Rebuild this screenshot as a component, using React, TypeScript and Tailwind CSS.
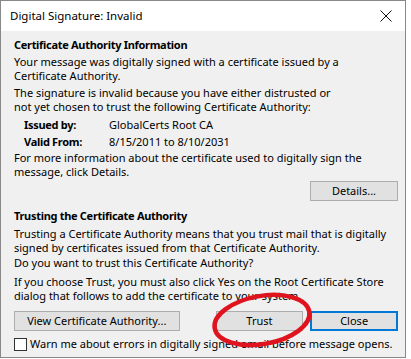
import React from 'react';

const font = { fontFamily: '"Noto Sans", "Open Sans", Arial, sans-serif' };

export default function App() {
  return (
    <div className="w-[411px] h-[359px] bg-white" style={font}>
      <div className="relative w-[406px] h-[358px] border border-[#888888] bg-[#f0f0f0] flex flex-col text-[11px] leading-[14px] text-black whitespace-nowrap">
        <div className="h-[30px] bg-white flex items-center justify-between pl-[9px] pr-[10px]">
          <span className="text-[11.5px]">Digital Signature: Invalid</span>
          <svg width="12" height="12" viewBox="0 0 12 12" className="mr-[3px]">
            <path d="M0.5 0.5L11.5 11.5M11.5 0.5L0.5 11.5" stroke="#111" strokeWidth="1" />
          </svg>
        </div>
        <div className="flex flex-col pl-[13px] pr-[7px] pt-[7px]">
          <div className="font-bold tracking-[-0.3px]">Certificate Authority Information</div>
          <div className="mt-[3px]">Your message was digitally signed with a certificate issued by a<br />Certificate Authority.</div>
          <div className="mt-[3px]">The signature is invalid because you have either distrusted or<br />not yet chosen to trust the following Certificate Authority:</div>
          <div className="mt-[4px] pl-[10px] flex flex-col gap-[3px]">
            <div className="flex"><span className="w-[85px] font-bold tracking-[-0.3px]">Issued by:</span><span>GlobalCerts Root CA</span></div>
            <div className="flex"><span className="w-[85px] font-bold tracking-[-0.3px]">Valid From:</span><span>8/15/2011 to 8/10/2031</span></div>
          </div>
          <div className="mt-[2px]">For more information about the certificate used to digitally sign the<br />message, click Details.</div>
          <div className="flex justify-end mt-[2px]">
            <button className="w-[88px] h-[20px] border border-[#adadad] bg-[#e1e1e1]">Details...</button>
          </div>
          <div className="font-bold tracking-[-0.3px] mt-[8px]">Trusting the Certificate Authority</div>
          <div className="mt-[4px]">Trusting a Certificate Authority means that you trust mail that is digitally<br />signed by certificates issued from that Certificate Authority.</div>
          <div className="mt-[1px]">Do you want to trust this Certificate Authority?</div>
          <div className="mt-[5px]">If you choose Trust, you must also click Yes on the Root Certificate Store<br />dialog that follows to add the certificate to your system.</div>
          <div className="flex mt-[8px]">
            <button className="w-[166px] h-[20px] border border-[#adadad] bg-[#e1e1e1]">View Certificate Authority...</button>
            <button className="ml-[36px] w-[88px] h-[20px] border border-[#adadad] bg-[#e1e1e1]">Trust</button>
            <button className="ml-[7px] w-[88px] h-[20px] border-2 border-[#0078d7] bg-[#e1e1e1]">Close</button>
          </div>
          <label className="flex items-center mt-[6px]">
            <span className="w-[13px] h-[13px] border border-[#333] bg-white" />
            <span className="ml-[3px]">Warn me about errors in digitally signed email before message opens.</span>
          </label>
        </div>
        <svg className="absolute left-[204px] top-[289px] pointer-events-none" width="115" height="62" viewBox="0 0 115 62">
          <ellipse cx="57" cy="30" rx="48" ry="24" transform="rotate(-10 57 30)" fill="none" stroke="#e0141e" strokeWidth="4.5" />
        </svg>
      </div>
    </div>
  );
}
